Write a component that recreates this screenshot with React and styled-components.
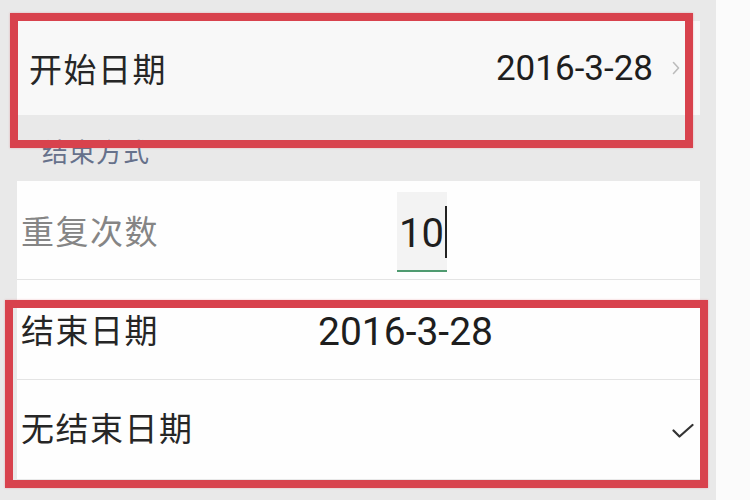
import React from 'react';
import styled, { createGlobalStyle } from 'styled-components';

const GlobalStyles = createGlobalStyle`
  html, body {
    margin: 0;
    padding: 0;
    background: #fbfbfb;
  }
  body {
    font-family: 'Noto Sans CJK SC', Roboto, sans-serif;
  }
`;

const Page = styled.div`
  display: flex;
  width: 750px;
  height: 500px;
  overflow: hidden;
`;

const Main = styled.div`
  position: relative;
  width: 716px;
  background: #e9e9e9;
  padding: 21px 16px 0 17px;
  box-sizing: border-box;
  display: flex;
  flex-direction: column;
`;

const Side = styled.div`
  flex: 1;
  background: #fbfbfb;
`;

const Card = styled.div`
  background: ${({ $tint }) => $tint || '#fefefe'};
  display: flex;
  flex-direction: column;
`;

const Row = styled.div`
  height: ${({ $h }) => $h}px;
  display: flex;
  align-items: center;
  padding: 0 ${({ $pr }) => $pr || 0}px 0 ${({ $pl }) => $pl || 4}px;
  border-bottom: ${({ $line }) => ($line ? '1px solid #e4e4e4' : 'none')};
  box-sizing: border-box;
`;

const Label = styled.span`
  font-size: 33px;
  letter-spacing: 1.5px;
  color: ${({ $muted }) => ($muted ? '#858585' : '#262626')};
  font-family: 'Noto Sans CJK SC', sans-serif;
  line-height: 1;
  margin-top: ${({ $dy }) => $dy || 0}px;
  flex: ${({ $w }) => ($w ? `0 0 ${$w}px` : '0 0 auto')};
`;

const Value = styled.span`
  font-family: Roboto, 'Noto Sans CJK SC', sans-serif;
  font-size: ${({ $size }) => $size || 35}px;
  color: #1e1e1e;
  line-height: 1;
  margin-top: ${({ $dy }) => $dy || 0}px;
  margin-left: ${({ $push }) => ($push ? 'auto' : '0')};
`;

const Chevron = styled.svg`
  width: 8px;
  height: 14px;
  margin-left: 19px;
  flex-shrink: 0;
`;

const SectionGap = styled.div`
  height: 66px;
  display: flex;
  align-items: flex-end;
  padding: 0 0 17px 25px;
  box-sizing: border-box;
`;

const SectionTitle = styled.span`
  font-size: 26px;
  color: #66718b;
  letter-spacing: 1px;
  line-height: 1;
`;

const NumberField = styled.div`
  margin-left: 204px;
  width: 50px;
  height: 80px;
  margin-top: 4px;
  background: #f3f3f3;
  border-bottom: 2px solid #4f9b70;
  display: flex;
  align-items: center;
  box-sizing: border-box;
  padding-left: 2px;
`;

const FieldText = styled.span`
  font-family: Roboto, sans-serif;
  font-size: 40px;
  color: #1e1e1e;
  line-height: 1;
  margin-top: 6px;
`;

const Caret = styled.span`
  display: inline-block;
  width: 2px;
  height: 52px;
  background: #222;
  margin-left: 1px;
  margin-top: 2px;
`;

const Check = styled.svg`
  width: 22px;
  height: 16px;
  margin-left: auto;
  margin-top: 2px;
`;

const Highlight = styled.div`
  position: absolute;
  top: ${({ $top }) => $top}px;
  left: ${({ $left }) => $left}px;
  width: ${({ $w }) => $w}px;
  height: ${({ $h }) => $h}px;
  border: 8px solid #d8424d;
  box-sizing: border-box;
  box-shadow: 0 0 2px rgba(216, 66, 77, 0.35);
  pointer-events: none;
`;

const App = () => {
  return (
    <>
      <GlobalStyles />
      <Page>
        <Main>
          <Card $tint="#f8f8f8">
            <Row $h={94} $pl={12} $pr={20}>
              <Label>开始日期</Label>
              <Value $push>2016-3-28</Value>
              <Chevron viewBox="0 0 8 14">
                <path d="M1.5 1.5 L6.5 7 L1.5 12.5" fill="none" stroke="#bcbcbc" strokeWidth="1.6" strokeLinecap="round" strokeLinejoin="round" />
              </Chevron>
            </Row>
          </Card>

          <SectionGap>
            <SectionTitle>结束方式</SectionTitle>
          </SectionGap>

          <Card>
            <Row $h={99} $line>
              <Label $muted $w={172}>重复次数</Label>
              <NumberField>
                <FieldText>10</FieldText>
                <Caret />
              </NumberField>
            </Row>
            <Row $h={100} $line>
              <Label $w={297}>结束日期</Label>
              <Value $size={39} $dy={6}>2016-3-28</Value>
            </Row>
            <Row $h={99} $pr={6}>
              <Label $dy={-4}>无结束日期</Label>
              <Check viewBox="0 0 22 16">
                <path d="M1.5 7.5 L7.5 13.5 L20.5 2" fill="none" stroke="#333" strokeWidth="2.2" strokeLinecap="round" strokeLinejoin="round" />
              </Check>
            </Row>
          </Card>

          <Highlight $top={13} $left={10} $w={683} $h={135} />
          <Highlight $top={300} $left={5} $w={703} $h={188} />
        </Main>
        <Side />
      </Page>
    </>
  );
};

export default App;
